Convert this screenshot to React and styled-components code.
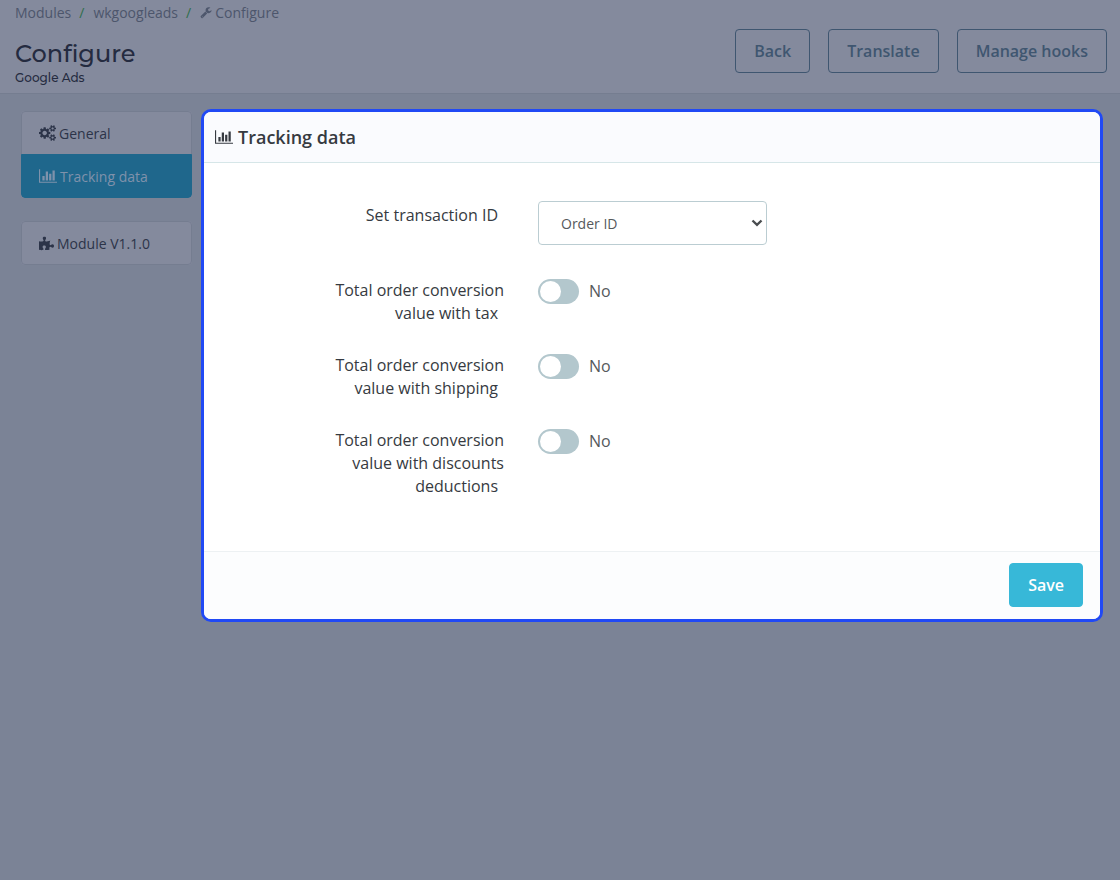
import React, { useState } from "react";
import styled, { createGlobalStyle } from "styled-components";
import { FaPuzzlePiece } from "react-icons/fa";

const GlobalStyle = createGlobalStyle`
  * {
    box-sizing: border-box;
  }

  body {
    margin: 0;
    background-color: #7b8396;
    font-family: "Open Sans", "Noto Sans", sans-serif;
    color: #363a41;
  }
`;

const Header = styled.header`
  display: flex;
  justify-content: space-between;
  align-items: flex-start;
  padding: 4px 13px 8px 15px;
  background-color: #848a9d;
  border-bottom: 1px solid #757d90;
`;

const Breadcrumb = styled.nav`
  display: flex;
  align-items: center;
  font-size: 14px;
  line-height: 17px;
`;

const Crumb = styled.a`
  display: flex;
  align-items: center;
  gap: 3px;
  color: #4d566c;
  text-decoration: none;

  & + &::before {
    content: "/";
    margin: 0 6px 0 8px;
    color: #2f6e4c;
  }
`;

const Title = styled.h1`
  margin: 16px 0 0;
  font-family: Montserrat, Inter, sans-serif;
  font-size: 24px;
  font-weight: 500;
  line-height: 34px;
  color: #242b40;
`;

const Subtitle = styled.p`
  margin: 0;
  font-family: Montserrat, Inter, sans-serif;
  font-size: 12px;
  font-weight: 500;
  line-height: 14px;
  color: #242b40;
`;

const Actions = styled.div`
  display: flex;
  gap: 18px;
  padding-top: 25px;
`;

const Button = styled.button`
  height: 44px;
  padding: 0 18px;
  border: 1px solid ${({ $primary }) => ($primary ? "#37b8d8" : "#3f5670")};
  border-radius: 4px;
  background-color: ${({ $primary }) => ($primary ? "#37b8d8" : "transparent")};
  color: ${({ $primary }) => ($primary ? "#ffffff" : "#3f5670")};
  font-family: inherit;
  font-size: 16px;
  font-weight: 600;
  cursor: pointer;
`;

const Main = styled.main`
  display: flex;
  align-items: flex-start;
  gap: 9px;
  padding: 15px 17px 15px 21px;
`;

const Sidebar = styled.nav`
  display: flex;
  flex-direction: column;
  flex: 0 0 171px;
  gap: 23px;
  padding-top: 2px;
`;

const MenuGroup = styled.div`
  overflow: hidden;
  border-radius: 4px;
  background-color: #848a9d;
`;

const MenuItem = styled.a`
  display: flex;
  align-items: center;
  gap: 3px;
  height: 44px;
  padding: 0 17px;
  border: 1px solid ${({ $active }) => ($active ? "#1f678c" : "#757d90")};
  background-color: ${({ $active }) => ($active ? "#1f678c" : "transparent")};
  color: ${({ $active }) => ($active ? "#7f92ab" : "#2c3449")};
  font-size: 14px;
  text-decoration: none;

  &:first-child {
    border-radius: 4px 4px 0 0;
  }

  &:last-child {
    border-bottom-left-radius: 4px;
    border-bottom-right-radius: 4px;
  }

  & + & {
    margin-top: -1px;
  }
`;

const Panel = styled.form`
  flex: 1;
  overflow: hidden;
  border: 3px solid #2049f5;
  border-radius: 10px;
  background-color: #ffffff;
`;

const PanelHeading = styled.h2`
  display: flex;
  align-items: center;
  gap: 5px;
  height: 51px;
  margin: 0;
  padding: 0 11px;
  border-bottom: 1px solid #d6e6e8;
  background-color: #fafbfe;
  font-size: 18px;
  font-weight: 600;
`;

const PanelBody = styled.div`
  display: flex;
  flex-direction: column;
  gap: 29px;
  padding: 38px 0 53px;
`;

const Row = styled.div`
  display: grid;
  grid-template-columns: 300px 1fr;
  align-items: start;
  gap: 34px;

  &:first-child {
    padding-bottom: 5px;
  }
`;

const Label = styled.label`
  justify-self: end;
  max-width: 176px;
  padding-top: ${({ $offset }) => ($offset ? "3px" : "0")};
  font-size: 16px;
  line-height: 23px;
  text-align: right;

  &::after {
    content: "";
    padding-left: 6px;
  }
`;

const SelectBox = styled.div`
  display: grid;
  align-items: center;
  width: 229px;

  & > * {
    grid-area: 1 / 1;
  }

  & > svg {
    justify-self: end;
    margin-right: 4px;
    color: #4a4d50;
    pointer-events: none;
  }
`;

const Select = styled.select`
  appearance: none;
  width: 100%;
  height: 44px;
  padding: 0 22px;
  border: 1px solid #bbcdd2;
  border-radius: 4px;
  background-color: #ffffff;
  color: #56595c;
  font-family: inherit;
  font-size: 14px;
`;

const SwitchField = styled.div`
  display: flex;
  align-items: center;
  gap: 10px;
  color: #56595c;
  font-size: 16px;
  line-height: 25px;
`;

const Switch = styled.input`
  appearance: none;
  display: flex;
  width: 41px;
  height: 25px;
  margin: 0;
  padding: 2px;
  border-radius: 13px;
  background-color: ${({ checked }) => (checked ? "#37b8d8" : "#b3c7cd")};
  cursor: pointer;

  &::before {
    content: "";
    width: 21px;
    height: 21px;
    margin-left: ${({ checked }) => (checked ? "auto" : "0")};
    border-radius: 50%;
    background-color: #ffffff;
  }
`;

const PanelFooter = styled.footer`
  display: flex;
  justify-content: flex-end;
  padding: 11px 17px 12px;
  border-top: 1px solid #edf1f3;
  background-color: #fcfdfe;
`;

const BarChart = () => (
  <svg
    width="18"
    height="16"
    viewBox="0 0 2048 1792"
    fill="currentColor"
    aria-hidden="true"
  >
    <path d="M640 896v512H384V896h256zM1024 384v1024H768V384h256zM2048 1536v128H0V128h128v1408h1920zM1408 640v768h-256V640h256zM1792 256v1152h-256V256h256z" />
  </svg>
);

const Wrench = () => (
  <svg
    width="12"
    height="12"
    viewBox="0 0 1792 1792"
    fill="currentColor"
    aria-hidden="true"
  >
    <path d="M448 1472q0-26-19-45t-45-19-45 19-19 45 19 45 45 19 45-19 19-45zM1092 948l-682 682q-37 37-90 37-52 0-91-37l-106-108q-38-36-38-90 0-53 38-91l681-681q39 98 114.500 173.500t173.500 114.500zM1726 513q0 39-23 106-47 134-164.500 217.500t-258.500 83.500q-185 0-316.500-131.500t-131.500-316.500 131.500-316.500 316.500-131.500q58 0 121.500 16.500t107.500 46.500q16 11 16 28t-16 28l-293 169v224l193 107q5-3 79-48.500t135.500-81 70.500-35.500q15 0 23.500 10t8.500 25z" />
  </svg>
);

const Cogs = () => (
  <svg
    width="17"
    height="16"
    viewBox="0 0 1920 1792"
    fill="currentColor"
    aria-hidden="true"
  >
    <path d="M896 896q0-106-75-181t-181-75-181 75-75 181 75 181 181 75 181-75 75-181zM1664 1408q0-52-38-90t-90-38-90 38-38 90q0 53 37.500 90.500t90.500 37.500 90.500-37.500 37.500-90.500zM1664 384q0-52-38-90t-90-38-90 38-38 90q0 53 37.500 90.500t90.500 37.500 90.500-37.500 37.500-90.500zM1280 805v185q0 10-7 19.500t-16 10.500l-155 24q-11 35-32 76 34 48 90 115 7 11 7 20 0 12-7 19-23 30-82.500 89.500t-78.500 59.500q-11 0-21-7l-115-90q-37 19-77 31-11 108-23 155-7 24-30 24h-186q-11 0-20-7.500t-10-17.500l-23-153q-34-10-75-31l-118 89q-7 7-20 7-11 0-21-8-144-133-144-160 0-9 7-19 10-14 41-53t47-61q-23-44-35-82l-152-24q-10-1-17-9.500t-7-19.500v-185q0-10 7-19.500t16-10.500l155-24q11-35 32-76-34-48-90-115-7-11-7-20 0-12 7-20 22-30 82-89t79-59q11 0 21 7l115 90q34-18 77-32 11-108 23-154 7-24 30-24h186q11 0 20 7.500t10 17.500l23 153q34 10 75 31l118-89q8-7 20-7 11 0 21 8 144 133 144 160 0 8-7 19-12 16-42 54t-45 60q23 48 34 82l152 23q10 2 17 10.500t7 19.500zM1920 1338v140q0 16-149 31-12 27-30 52 51 113 51 138 0 4-4 7-122 71-124 71-8 0-46-47t-52-68q-20 2-30 2t-30-2q-14 21-52 68t-46 47q-2 0-124-71-4-3-4-7 0-25 51-138-18-25-30-52-149-15-149-31v-140q0-16 149-31 13-29 30-52-51-113-51-138 0-4 4-7 4-2 35-20t59-34 30-16q8 0 46 46.500t52 67.500q20-2 30-2t30 2q51-71 92-112l6-2q4 0 124 70 4 3 4 7 0 25-51 138 17 23 30 52 149 15 149 31zM1920 314v140q0 16-149 31-12 27-30 52 51 113 51 138 0 4-4 7-122 71-124 71-8 0-46-47t-52-68q-20 2-30 2t-30-2q-14 21-52 68t-46 47q-2 0-124-71-4-3-4-7 0-25 51-138-18-25-30-52-149-15-149-31v-140q0-16 149-31 13-29 30-52-51-113-51-138 0-4 4-7 4-2 35-20t59-34 30-16q8 0 46 46.500t52 67.500q20-2 30-2t30 2q51-71 92-112l6-2q4 0 124 70 4 3 4 7 0 25-51 138 17 23 30 52 149 15 149 31z" />
  </svg>
);

const Chevron = () => (
  <svg width="12" height="8" viewBox="0 0 12 8" fill="none" aria-hidden="true">
    <path d="M1.500 1.500 6 5.800l4.500-4.300" stroke="currentColor" strokeWidth="2.4" />
  </svg>
);

const switches = [
  { id: "tax", label: "Total order conversion value with tax" },
  { id: "shipping", label: "Total order conversion value with shipping" },
  {
    id: "discounts",
    label: "Total order conversion value with discounts deductions",
  },
];

const App = () => {
  const [values, setValues] = useState({});

  const toggle = (id) => setValues({ ...values, [id]: !values[id] });

  return (
    <>
      <GlobalStyle />
      <Header>
        <div>
          <Breadcrumb>
            <Crumb href="#modules">Modules</Crumb>
            <Crumb href="#wkgoogleads">wkgoogleads</Crumb>
            <Crumb href="#configure">
              <Wrench />
              Configure
            </Crumb>
          </Breadcrumb>
          <Title>Configure</Title>
          <Subtitle>Google Ads</Subtitle>
        </div>
        <Actions>
          <Button type="button">Back</Button>
          <Button type="button">Translate</Button>
          <Button type="button">Manage hooks</Button>
        </Actions>
      </Header>
      <Main>
        <Sidebar>
          <MenuGroup>
            <MenuItem href="#general">
              <Cogs />
              General
            </MenuItem>
            <MenuItem href="#tracking" $active>
              <BarChart />
              Tracking data
            </MenuItem>
          </MenuGroup>
          <MenuGroup>
            <MenuItem href="#module">
              <FaPuzzlePiece size={15} />
              Module V1.1.0
            </MenuItem>
          </MenuGroup>
        </Sidebar>
        <Panel onSubmit={(e) => e.preventDefault()}>
          <PanelHeading>
            <BarChart />
            Tracking data
          </PanelHeading>
          <PanelBody>
            <Row>
              <Label htmlFor="transaction" $offset>
                Set transaction ID
              </Label>
              <SelectBox>
                <Select id="transaction">
                  <option>Order ID</option>
                  <option>Order reference</option>
                </Select>
                <Chevron />
              </SelectBox>
            </Row>
            {switches.map(({ id, label }) => (
              <Row key={id}>
                <Label htmlFor={id}>{label}</Label>
                <SwitchField>
                  <Switch
                    id={id}
                    type="checkbox"
                    role="switch"
                    checked={Boolean(values[id])}
                    onChange={() => toggle(id)}
                  />
                  <span>{values[id] ? "Yes" : "No"}</span>
                </SwitchField>
              </Row>
            ))}
          </PanelBody>
          <PanelFooter>
            <Button type="submit" $primary>
              Save
            </Button>
          </PanelFooter>
        </Panel>
      </Main>
    </>
  );
};

export default App;
